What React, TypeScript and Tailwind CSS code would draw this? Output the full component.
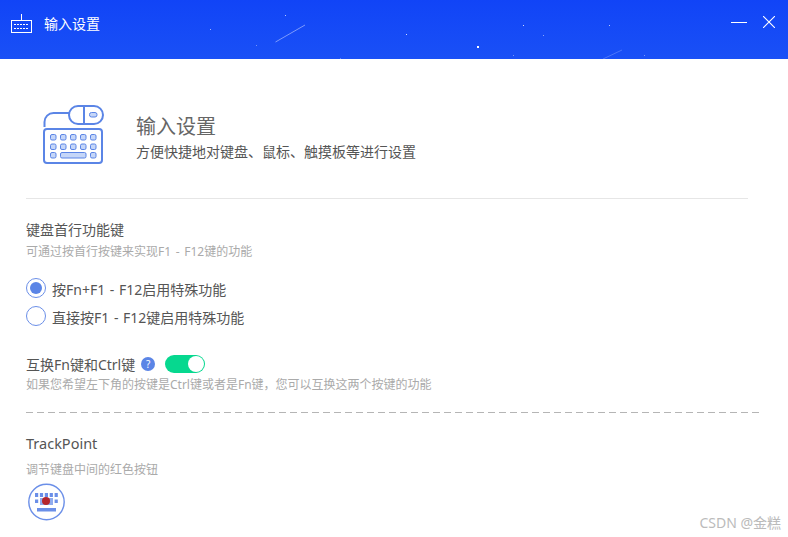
const FONT = "font-['Noto_Sans','Noto_Sans_CJK_SC',sans-serif]";

function HeaderArt() {
  const stars: [number, number, number][] = [
    [210, 29, 0.6], [285, 15, 0.7], [256, 45, 0.4], [406, 34, 0.8], [477, 46, 1.2], [523, 25, 0.8],
    [543, 35, 0.5], [609, 25, 0.7], [513, 55, 0.4], [644, 55, 0.4], [340, 58, 0.3],
  ];
  return (
    <svg className="absolute inset-0 pointer-events-none" width="788" height="59" viewBox="0 0 788 59">
      {stars.map(([x, y, o]) => (
        <rect key={`${x}-${y}`} x={x} y={y} width={o > 1 ? 2 : 1} height={o > 1 ? 2 : 1} fill="#fff" opacity={Math.min(o, 1)} />
      ))}
      <line x1="275.5" y1="42" x2="305" y2="25" stroke="#a9bcff" strokeWidth="1" opacity="0.7" />
      <line x1="603" y1="59" x2="622" y2="50" stroke="#a9bcff" strokeWidth="1" opacity="0.35" />
    </svg>
  );
}

function TitleKeyboard() {
  return (
    <svg width="22" height="20" viewBox="0 0 22 20" fill="none" stroke="#fff" strokeWidth="1" shapeRendering="crispEdges">
      <path d="M10.5 0v6" />
      <rect x="0.5" y="6.5" width="20" height="12" />
      <path d="M3 10.5h15M3 14.5h15" strokeDasharray="2 1" />
    </svg>
  );
}

function HeroIcon() {
  const keys = [0, 1, 2, 3, 4];
  const blue = '#5b85e6';
  const light = '#c5d6f8';
  return (
    <svg width="62" height="60" viewBox="0 0 62 60" fill="none">
      <path d="M1.5 22v-5a9 9 0 0 1 9-9H26" stroke={blue} strokeWidth="2" />
      <rect x="26" y="1" width="34" height="18" rx="9" stroke={blue} strokeWidth="2" />
      <path d="M41 1v18" stroke={blue} strokeWidth="2" />
      <rect x="46.5" y="7.5" width="7.5" height="4.5" rx="2" fill={light} stroke={blue} />
      <rect x="1" y="24" width="58" height="34" rx="3" stroke={blue} strokeWidth="2" />
      {keys.map((i) => (
        <rect key={`a${i}`} x={7.5 + i * 10} y="29.5" width="5.5" height="5.5" rx="1.5" fill={light} stroke={blue} />
      ))}
      {keys.map((i) => (
        <rect key={`b${i}`} x={7.5 + i * 10} y="39" width="5.5" height="5.5" rx="1.5" fill={light} stroke={blue} />
      ))}
      <rect x="7.5" y="47.5" width="5.5" height="5.5" rx="1.5" fill={light} stroke={blue} />
      <rect x="17.5" y="47.5" width="25.5" height="5.5" rx="1.5" fill={light} stroke={blue} />
      <rect x="47.5" y="47.5" width="5.5" height="5.5" rx="1.5" fill={light} stroke={blue} />
    </svg>
  );
}

function TrackPointIcon() {
  const cols = [0, 1, 2, 3, 4];
  const blue = '#6b8fe8';
  return (
    <svg width="38" height="38" viewBox="0 0 38 38" fill="none">
      <circle cx="18.5" cy="19" r="17.7" stroke={blue} strokeWidth="1.4" />
      {cols.map((i) => (
        <rect key={`t${i}`} x={7 + i * 4.9} y="10" width="3.2" height="4" fill={blue} />
      ))}
      <rect x="7" y="16.5" width="3.2" height="3.5" fill={blue} />
      <rect x="26.6" y="16.5" width="3.2" height="3.5" fill={blue} />
      <rect x="12" y="15" width="13" height="7" fill={blue} opacity="0.75" />
      <circle cx="18" cy="18" r="4" fill="#b5252c" />
      <rect x="9" y="25" width="19" height="3.5" fill={blue} />
    </svg>
  );
}

function Radio({ checked, label }: { checked?: boolean; label: string }) {
  return (
    <div className="flex items-center h-[28px]">
      <span className="w-5 h-5 rounded-full border border-[#6b8fe8] flex items-center justify-center shrink-0">
        {checked && <span className="w-3 h-3 rounded-full bg-[#5b85e6]" />}
      </span>
      <span className="ml-[6px] pt-[3px] text-[14px] text-[#555] [word-spacing:1px]">{label}</span>
    </div>
  );
}

export default function App() {
  return (
    <div className={`relative w-[788px] h-[537px] overflow-hidden bg-white ${FONT}`}>
      {/* 标题栏 */}
      <div className="relative h-[59px] bg-gradient-to-b from-[#1144f7] to-[#1a50f6] flex items-center pl-[11px] pb-[11px] text-white">
        <HeaderArt />
        <TitleKeyboard />
        <span className="ml-[11px] text-[14px] leading-none">输入设置</span>
        <div className="ml-auto mr-[13px] flex items-center gap-[16px] relative -mt-[4px]">
          <svg width="16" height="12" viewBox="0 0 16 12" stroke="#fff" strokeWidth="1" fill="none">
            <path d="M0 6.5h16" />
          </svg>
          <svg width="12" height="12" viewBox="0 0 12 12" stroke="#fff" strokeWidth="1.1" fill="none">
            <path d="M0 0l12 12M12 0L0 12" />
          </svg>
        </div>
      </div>

      <div className="pl-[26px] pr-[40px]">
        {/* 顶部说明 */}
        <div className="h-[140px] border-b border-[#e6e6e6] pl-[17px] pt-[46px] flex">
          <HeroIcon />
          <div className="ml-[31px] pt-[7px]">
            <div className="text-[20px] leading-[30px] text-[#666]">输入设置</div>
            <div className="text-[14px] leading-[20px] text-[#555]">方便快捷地对键盘、鼠标、触摸板等进行设置</div>
          </div>
        </div>

        {/* 首行功能键 */}
        <div className="pt-[21px]">
          <div className="text-[14px] leading-[20px] text-[#555]">键盘首行功能键</div>
          <div className="text-[12px] leading-[18px] text-[#aaa] mt-[3px] [word-spacing:1.5px]">可通过按首行按键来实现F1 - F12键的功能</div>
          <div className="mt-[13px]">
            <Radio checked label="按Fn+F1 - F12启用特殊功能" />
            <Radio label="直接按F1 - F12键启用特殊功能" />
          </div>
        </div>

        {/* 互换 Fn / Ctrl */}
        <div className="mt-[24px] flex items-center h-[20px]">
          <span className="text-[14px] text-[#555]">互换Fn键和Ctrl键</span>
          <span className="ml-[6px] w-[14px] h-[14px] rounded-full bg-[#5b85e6] text-white text-[10px] leading-none flex items-center justify-center">?</span>
          <span className="ml-[10px] w-10 h-[18px] rounded-full bg-[#06d88f] flex items-center justify-end pr-[1px]">
            <span className="w-4 h-4 rounded-full bg-white" />
          </span>
        </div>
        <div className="text-[12px] leading-[18px] text-[#aaa] mt-[2px] whitespace-nowrap">如果您希望左下角的按键是Ctrl键或者是Fn键，您可以互换这两个按键的功能</div>
        <div className="mt-[18px] -mr-[14px] h-px bg-[repeating-linear-gradient(to_right,#b5b5b5_0,#b5b5b5_7px,transparent_7px,transparent_11px)]" />

        {/* TrackPoint */}
        <div className="mt-[20px] text-[14.5px] leading-[20px] text-[#555]">TrackPoint</div>
        <div className="text-[12px] leading-[18px] text-[#aaa] mt-[8px]">调节键盘中间的红色按钮</div>
        <div className="mt-[4px] ml-[2px]">
          <TrackPointIcon />
        </div>
      </div>

      {/* 水印 */}
      <div className="absolute right-[7px] bottom-[4px] text-[14px] leading-[20px] text-[#bbb]">CSDN @金糕</div>
    </div>
  );
}
